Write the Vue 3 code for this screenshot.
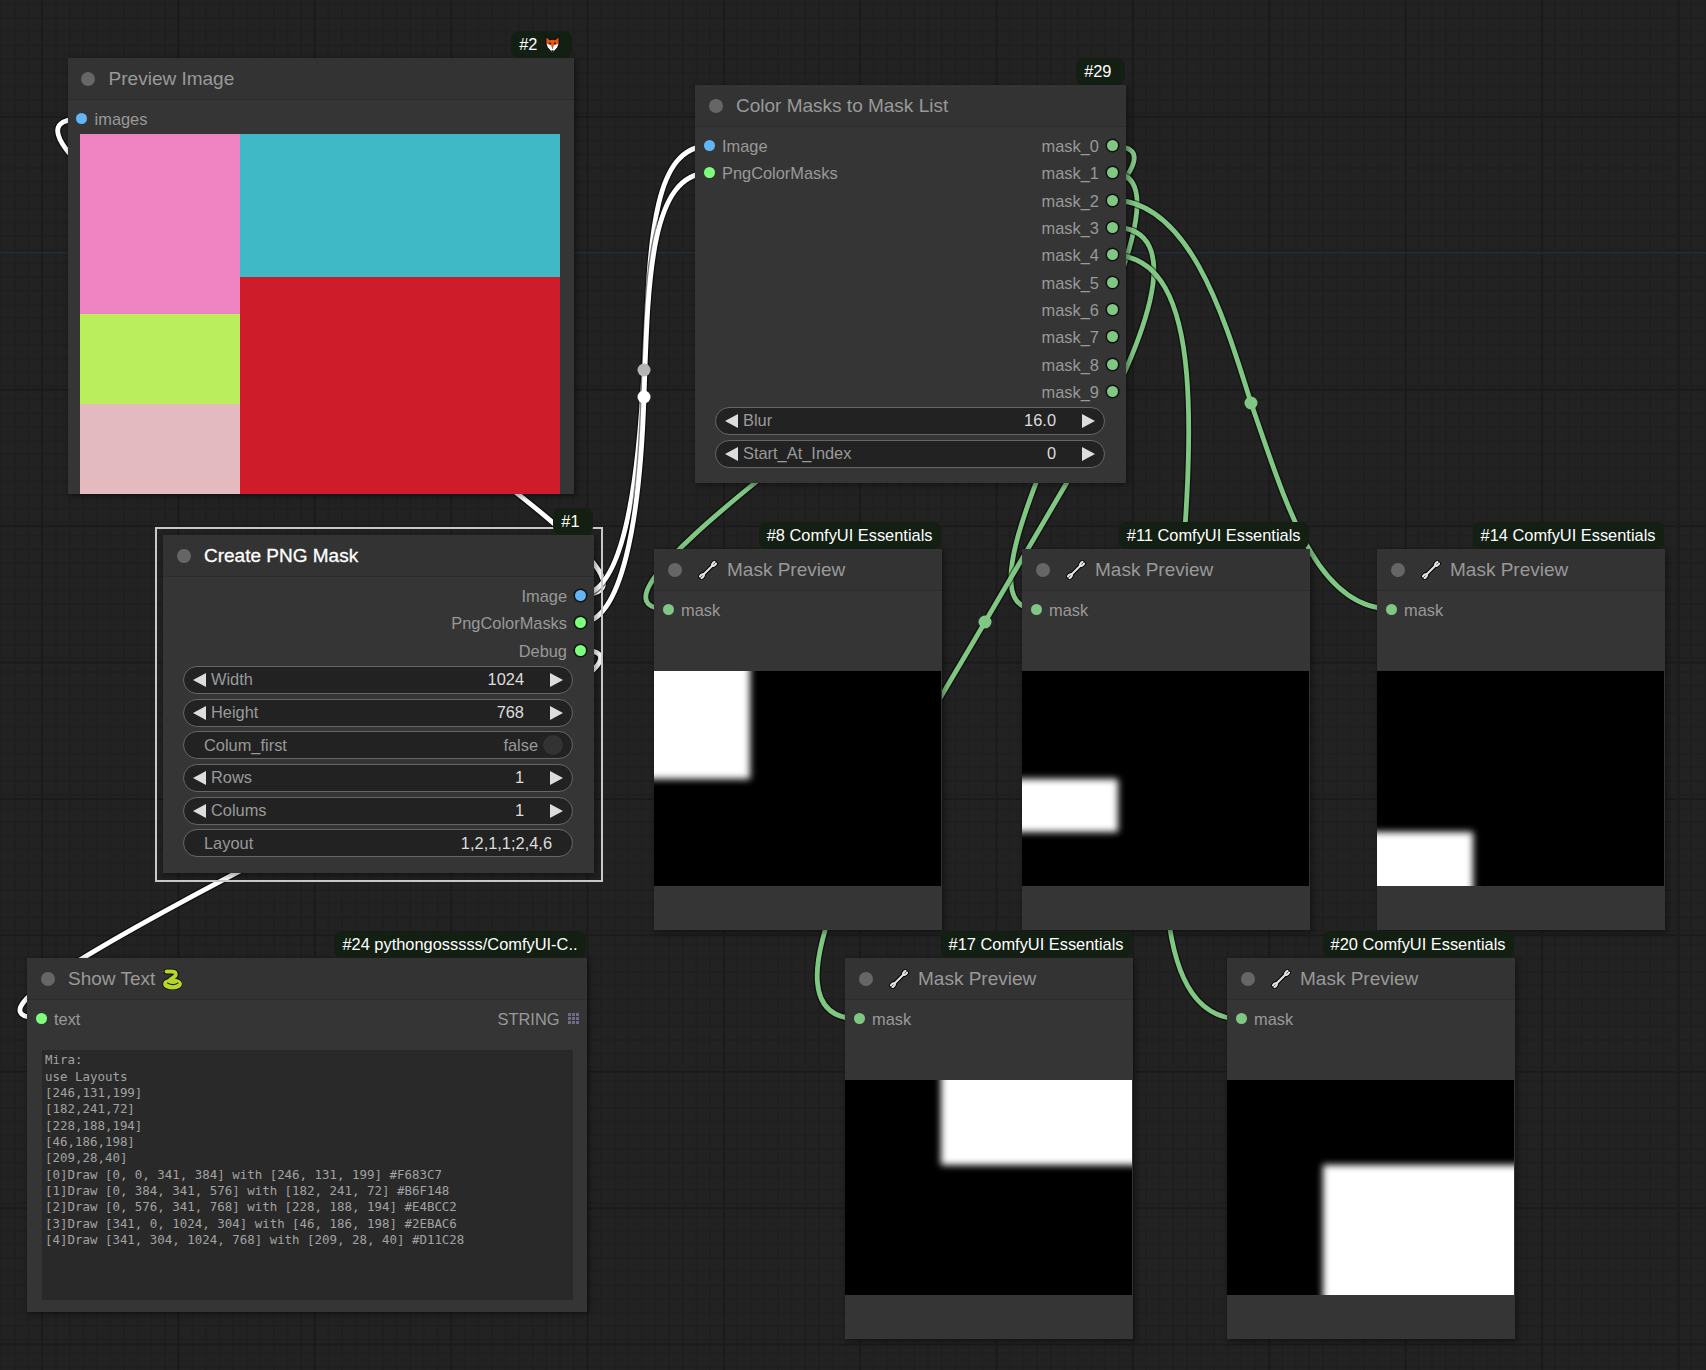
<script setup>
const BLUE = '#64b5f6'
const LIME = '#7dff7d'
const MASK = '#81c784'

// ComfyUI style spline: control points pushed out by a quarter of the distance
const spline = (x1, y1, x2, y2) => {
    const d = Math.hypot(x2 - x1, y2 - y1) * 0.25
    return `M${x1} ${y1} C${x1 + d} ${y1}, ${x2 - d} ${y2}, ${x2} ${y2}`
}

const wires = [
    { color: '#fff', d: spline(580, 595, 81, 119) },
    { color: '#fff', d: spline(580, 650, 40.5, 1018) },
    { color: '#fff', d: 'M580 595 C622 595, 638 490, 644 370 C650 250, 650 146, 709 146' },
    { color: '#fff', d: 'M580 623 C622 623, 640 520, 644 397 C648 280, 650 173, 709 173' },
    { color: MASK, d: spline(1112, 146, 668, 609) },
    { color: MASK, d: spline(1112, 173, 1036, 609) },
    { color: MASK, d: 'M1112 200 C1190 200, 1225 320, 1251 403 C1285 500, 1315 609, 1391 609' },
    { color: MASK, d: 'M1112 227 C1190 227, 1150 340, 1066 484 L985 622 C920 735, 735 1019, 859 1019' },
    { color: MASK, d: spline(1112, 255, 1241, 1019) }
]

const reroutes = [
    { x: 644, y: 370, color: '#b4b4b4' },
    { x: 644, y: 397, color: '#fff' },
    { x: 985, y: 622, color: MASK },
    { x: 1251, y: 403, color: MASK }
]

const maskOutputs = Array.from({ length: 10 }, (_, i) => ({ name: `mask_${i}`, color: MASK }))

const nodes = [
    {
        id: 2, title: 'Preview Image', badge: '#2', badgeIcon: 'fox',
        x: 67.6, y: 58, w: 506.4, h: 436, kind: 'preview',
        inputs: [{ name: 'images', color: BLUE }]
    },
    {
        id: 29, title: 'Color Masks to Mask List', badge: '#29', shortBadge: true,
        x: 695, y: 85, w: 431, h: 398,
        inputs: [{ name: 'Image', color: BLUE }, { name: 'PngColorMasks', color: LIME }],
        outputs: maskOutputs,
        widgets: [
            { label: 'Blur', value: '16.0', type: 'number' },
            { label: 'Start_At_Index', value: '0', type: 'number' }
        ]
    },
    {
        id: 1, title: 'Create PNG Mask', badge: '#1', shortBadge: true, selected: true,
        x: 163, y: 535, w: 431, h: 338,
        outputs: [
            { name: 'Image', color: BLUE },
            { name: 'PngColorMasks', color: LIME },
            { name: 'Debug', color: LIME }
        ],
        widgets: [
            { label: 'Width', value: '1024', type: 'number' },
            { label: 'Height', value: '768', type: 'number' },
            { label: 'Colum_first', value: 'false', type: 'toggle' },
            { label: 'Rows', value: '1', type: 'number' },
            { label: 'Colums', value: '1', type: 'number' },
            { label: 'Layout', value: '1,2,1,1;2,4,6', type: 'text' }
        ]
    },
    {
        id: 24, title: 'Show Text', badge: '#24 pythongosssss/ComfyUI-C..', titleIcon: 'snake',
        x: 27, y: 958, w: 560, h: 354, kind: 'text',
        inputs: [{ name: 'text', color: LIME }]
    },
    { id: 8, badge: '#8 ComfyUI Essentials', x: 654, y: 549, rect: [0, 0, 341, 384] },
    { id: 11, badge: '#11 ComfyUI Essentials', x: 1022, y: 549, rect: [0, 384, 341, 576] },
    { id: 14, badge: '#14 ComfyUI Essentials', x: 1377, y: 549, rect: [0, 576, 341, 768] },
    { id: 17, badge: '#17 ComfyUI Essentials', x: 845, y: 958, rect: [341, 0, 1024, 304] },
    { id: 20, badge: '#20 ComfyUI Essentials', x: 1227, y: 958, rect: [341, 304, 1024, 768] }
].map((n) => (n.rect
    ? { ...n, title: 'Mask Preview', titleIcon: 'wrench', w: 288, h: 381, kind: 'mask', inputs: [{ name: 'mask', color: MASK }] }
    : n))

// white part of a mask, stretched past the picture edge so the blur only shows inside
const maskStyle = ([x0, y0, x1, y1]) => {
    const k = 287 / 1024
    const left = x0 === 0 ? -20 : x0 * k
    const top = y0 === 0 ? -20 : y0 * k
    const right = x1 === 1024 ? 307 : x1 * k
    const bottom = y1 === 768 ? 235 : y1 * k
    return {
        left: `${left}px`,
        top: `${top}px`,
        width: `${right - left}px`,
        height: `${bottom - top}px`
    }
}

const nodeStyle = (n) => ({
    left: `${n.x}px`,
    top: `${n.y}px`,
    width: `${n.w}px`,
    height: `${n.h}px`
})

const showText = `Mira:
use Layouts
[246,131,199]
[182,241,72]
[228,188,194]
[46,186,198]
[209,28,40]
[0]Draw [0, 0, 341, 384] with [246, 131, 199] #F683C7
[1]Draw [0, 384, 341, 576] with [182, 241, 72] #B6F148
[2]Draw [0, 576, 341, 768] with [228, 188, 194] #E4BCC2
[3]Draw [341, 0, 1024, 304] with [46, 186, 198] #2EBAC6
[4]Draw [341, 304, 1024, 768] with [209, 28, 40] #D11C28`
</script>

<template>
    <div class="canvas">
        <svg class="links" width="1706" height="1370" viewBox="0 0 1706 1370" fill="none">
            <g v-for="(w, i) in wires" :key="i">
                <path :d="w.d" stroke="#000" stroke-opacity="0.5" stroke-width="7.5" />
                <path :d="w.d" :stroke="w.color" stroke-width="4.8" />
            </g>
            <circle
                v-for="(r, i) in reroutes"
                :key="'r' + i"
                :cx="r.x"
                :cy="r.y"
                r="6.5"
                :fill="r.color"
            />
        </svg>

        <div
            v-for="n in nodes"
            :key="n.id"
            class="node"
            :class="{ selected: n.selected }"
            :style="nodeStyle(n)"
        >
            <div class="badge" :class="{ 'badge-short': n.shortBadge }">
                <span>{{ n.badge }}</span>
                <svg v-if="n.badgeIcon === 'fox'" class="fox" width="17" height="19" viewBox="0 0 30 36">
                    <path d="M1 0 L9 7 Q15 5 21 7 L29 0 L29 17 L26 23 L15 36 L4 23 L1 17 Z" fill="#111" />
                    <path d="M3.5 4.5 L9.5 10 Q15 8 20.5 10 L26.5 4.5 L26.5 17 L24 21 L15 25 L6 21 L3.5 17 Z" fill="#e8561a" />
                    <path d="M4 17 L12 19 L15 27 L18 19 L26 17 L24 23 L15 33 L6 23 Z" fill="#fff" />
                    <path d="M12.5 29 H17.5 L15 33.5 Z" fill="#111" />
                    <circle cx="10.5" cy="16" r="1.8" fill="#111" />
                    <circle cx="19.5" cy="16" r="1.8" fill="#111" />
                </svg>
            </div>

            <div class="title">
                <i class="title-dot"></i>
                <svg v-if="n.titleIcon === 'wrench'" class="wrench" width="20" height="20" viewBox="0 0 20 20" fill="none" stroke-linecap="round">
                    <g stroke="#000" stroke-width="4">
                        <path d="M6 14 L14 6" />
                        <path d="M14 6 Q14 3 16.4 2" />
                        <path d="M14 6 Q17 6 18 3.6" />
                        <path d="M6 14 Q6 17 3.6 18" />
                        <path d="M6 14 Q3 14 2 16.4" />
                    </g>
                    <g stroke="#e2e2e2" stroke-width="2.2">
                        <path d="M6 14 L14 6" />
                        <path d="M14 6 Q14 3 16.4 2" />
                        <path d="M14 6 Q17 6 18 3.6" />
                        <path d="M6 14 Q6 17 3.6 18" />
                        <path d="M6 14 Q3 14 2 16.4" />
                    </g>
                </svg>
                <span>{{ n.title }}</span>
                <svg v-if="n.titleIcon === 'snake'" class="snake" width="20" height="22" viewBox="0 0 20 22" fill="none" stroke-linecap="round" stroke-linejoin="round">
                    <path d="M3 3.5 H0.8" stroke="#c8452a" stroke-width="1.2" />
                    <ellipse cx="10.5" cy="16" rx="7.5" ry="3.6" stroke="#000" stroke-width="5.4" fill="#000" />
                    <path d="M4.5 3.5 H9.5 C14.5 3.5 15 7 12 9 C9.5 10.5 8 11 7.5 12.5" stroke="#000" stroke-width="5.6" />
                    <ellipse cx="10.5" cy="16" rx="7.5" ry="3.6" stroke="#b7d62c" stroke-width="3.8" fill="#b7d62c" />
                    <path d="M4.5 3.5 H9.5 C14.5 3.5 15 7 12 9 C9.5 10.5 8 11 7.5 12.5" stroke="#b7d62c" stroke-width="3.8" />
                    <path d="M5.5 15 C9 17 13 17 16 15" stroke="#1d2608" stroke-width="1.1" />
                </svg>
            </div>

            <div class="slots" :class="{ 'slots-text': n.kind === 'text' }">
                <div class="slot-col">
                    <div v-for="s in n.inputs" :key="s.name" class="slot">
                        <i class="slot-dot" :style="{ background: s.color }"></i>
                        <span class="slot-name">{{ s.name }}</span>
                    </div>
                </div>
                <div v-if="n.outputs" class="slot-col outs">
                    <div v-for="s in n.outputs" :key="s.name" class="slot">
                        <span class="slot-name">{{ s.name }}</span>
                        <i class="slot-dot ringed" :style="{ background: s.color }"></i>
                    </div>
                </div>
                <div v-if="n.kind === 'text'" class="type-tag">
                    <span class="slot-name">STRING</span>
                    <span class="dots"><i v-for="k in 9" :key="k"></i></span>
                </div>
            </div>

            <div v-if="n.widgets" class="widgets">
                <div v-for="w in n.widgets" :key="w.label" class="widget" :class="'w-' + w.type">
                    <i v-if="w.type === 'number'" class="arrow left"></i>
                    <span class="w-label">{{ w.label }}</span>
                    <span class="w-value">{{ w.value }}</span>
                    <i v-if="w.type === 'number'" class="arrow right"></i>
                    <i v-if="w.type === 'toggle'" class="knob"></i>
                </div>
            </div>

            <div v-if="n.kind === 'preview'" class="preview">
                <div class="pv-col pv-left">
                    <div class="pv-pink"></div>
                    <div class="pv-green"></div>
                    <div class="pv-rose"></div>
                </div>
                <div class="pv-col pv-right">
                    <div class="pv-teal"></div>
                    <div class="pv-red"></div>
                </div>
            </div>

            <div v-if="n.kind === 'mask'" class="mask-image">
                <div class="mask-white" :style="maskStyle(n.rect)"></div>
            </div>

            <div v-if="n.kind === 'text'" class="textbox">{{ showText }}</div>
        </div>
    </div>
</template>

<style scoped>
.canvas {
    position: relative;
    width: 1706px;
    height: 1370px;
    overflow: hidden;
    font-family: "Liberation Sans", Arial, sans-serif;
    background-color: #222;
    background-image:
        linear-gradient(180deg, transparent 252px, #1f2a38 252px, #1f2a38 253.5px, transparent 253.5px),
        linear-gradient(90deg, #1b1b1b 2px, transparent 2px),
        linear-gradient(180deg, #1b1b1b 2px, transparent 2px),
        linear-gradient(90deg, #1f1f1f 1.5px, transparent 1.5px),
        linear-gradient(180deg, #1f1f1f 1.5px, transparent 1.5px);
    background-size:
        100% 100%,
        136.4px 100%,
        100% 136.4px,
        13.64px 100%,
        100% 13.64px;
    background-position:
        0 0,
        41px 0,
        0 116px,
        0.5px 0,
        0 3.5px;
}

.links {
    position: absolute;
    left: 0;
    top: 0;
}

.node {
    position: absolute;
    display: flex;
    flex-direction: column;
    background: #353535;
    box-shadow: 2px 2px 7px rgba(0, 0, 0, 0.45);
    color: #999;
    font-size: 16.4px;
}

.selected::after {
    content: "";
    position: absolute;
    inset: -8px -9px -9px -8px;
    border: 2px solid #c8c8c8;
    pointer-events: none;
}

.badge {
    position: absolute;
    right: 1.5px;
    bottom: 100%;
    z-index: 2;
    display: flex;
    align-items: center;
    gap: 7px;
    height: 27px;
    padding: 0 8px;
    border-radius: 8px;
    background: #121f12;
    color: #fff;
    font-size: 16.4px;
    white-space: nowrap;
}

.badge-short {
    padding-right: 13px;
}

.fox {
    margin-right: 3px;
}

.title {
    display: flex;
    flex: none;
    align-items: center;
    height: 41px;
    padding-left: 13.5px;
    background: #333;
    border-bottom: 1px solid #2c2c2c;
    font-size: 19px;
    color: #999;
}

.selected .title {
    color: #fff;
    -webkit-text-stroke: 0.3px #fff;
}

.title-dot {
    flex: none;
    width: 14px;
    height: 14px;
    margin-right: 13.5px;
    border-radius: 50%;
    background: #666;
}

.wrench {
    flex: none;
    margin: 0 9px 0 3px;
}

.snake {
    flex: none;
    margin-left: 7px;
}

.slots {
    position: relative;
    display: flex;
    flex: none;
    justify-content: space-between;
    padding: 5px 8.5px 0;
}

.slot-col {
    display: flex;
    flex-direction: column;
}

.slot {
    display: flex;
    align-items: center;
    gap: 7.5px;
    height: 27.3px;
    white-space: nowrap;
}

.slot-name {
    padding-top: 2px;
}

.outs .slot {
    justify-content: flex-end;
}

.slot-dot {
    flex: none;
    width: 11px;
    height: 11px;
    border-radius: 50%;
}

.ringed {
    box-shadow: 0 0 0 1.5px #111;
}

.type-tag {
    display: flex;
    align-items: center;
    gap: 8px;
    height: 27.3px;
}

.dots {
    display: grid;
    grid-template-columns: repeat(3, 3px);
    grid-auto-rows: 3px;
    gap: 1px;
}

.dots i {
    background: #6c6c88;
}

.widgets {
    display: flex;
    flex-direction: column;
    gap: 4.7px;
    margin: 0 21px 0 20px;
    padding-top: 2px;
}

.widget {
    display: flex;
    align-items: center;
    box-sizing: border-box;
    height: 28px;
    padding: 0 9px;
    border: 1.3px solid #666;
    border-radius: 14px;
    background: #222;
}

.w-label {
    flex: 1;
}

.w-value {
    color: #ddd;
    white-space: nowrap;
}

.arrow {
    flex: none;
    width: 0;
    height: 0;
    border-top: 7px solid transparent;
    border-bottom: 7px solid transparent;
}

.arrow.left {
    margin-right: 5px;
    border-right: 13px solid #ddd;
}

.arrow.right {
    margin-left: 26px;
    border-left: 13px solid #ddd;
}

.w-toggle {
    padding: 0 9px 0 20px;
}

.w-toggle .w-value {
    color: #999;
}

.knob {
    flex: none;
    width: 20px;
    height: 20px;
    margin-left: 5px;
    border-radius: 50%;
    background: #333;
}

.w-text {
    padding: 0 20px;
}

.preview {
    display: flex;
    width: 480px;
    height: 360px;
    margin: 2px 0 0 12.4px;
}

.pv-col {
    display: flex;
    flex-direction: column;
}

.pv-left {
    width: 160px;
}

.pv-right {
    width: 320px;
}

.pv-pink {
    height: 180px;
    background: #f084c3;
}

.pv-green {
    height: 90px;
    background: #baee5d;
}

.pv-rose {
    height: 90px;
    background: #e3bac0;
}

.pv-teal {
    height: 142.5px;
    background: #40b9c6;
}

.pv-red {
    height: 217.5px;
    background: #ce1c2b;
}

.mask-image {
    position: relative;
    flex: none;
    width: 287px;
    height: 215px;
    margin-top: 47.7px;
    overflow: hidden;
    background: #000;
}

.mask-white {
    position: absolute;
    background: #fff;
    filter: blur(3.5px);
}

.textbox {
    flex: none;
    box-sizing: border-box;
    height: 250px;
    margin: 18px 14px 0 15px;
    padding: 2px 3px;
    background: #292929;
    color: #a2a2a2;
    font-family: "DejaVu Sans Mono", "Liberation Mono", monospace;
    font-size: 12.45px;
    line-height: 16.35px;
    white-space: pre;
}
</style>
